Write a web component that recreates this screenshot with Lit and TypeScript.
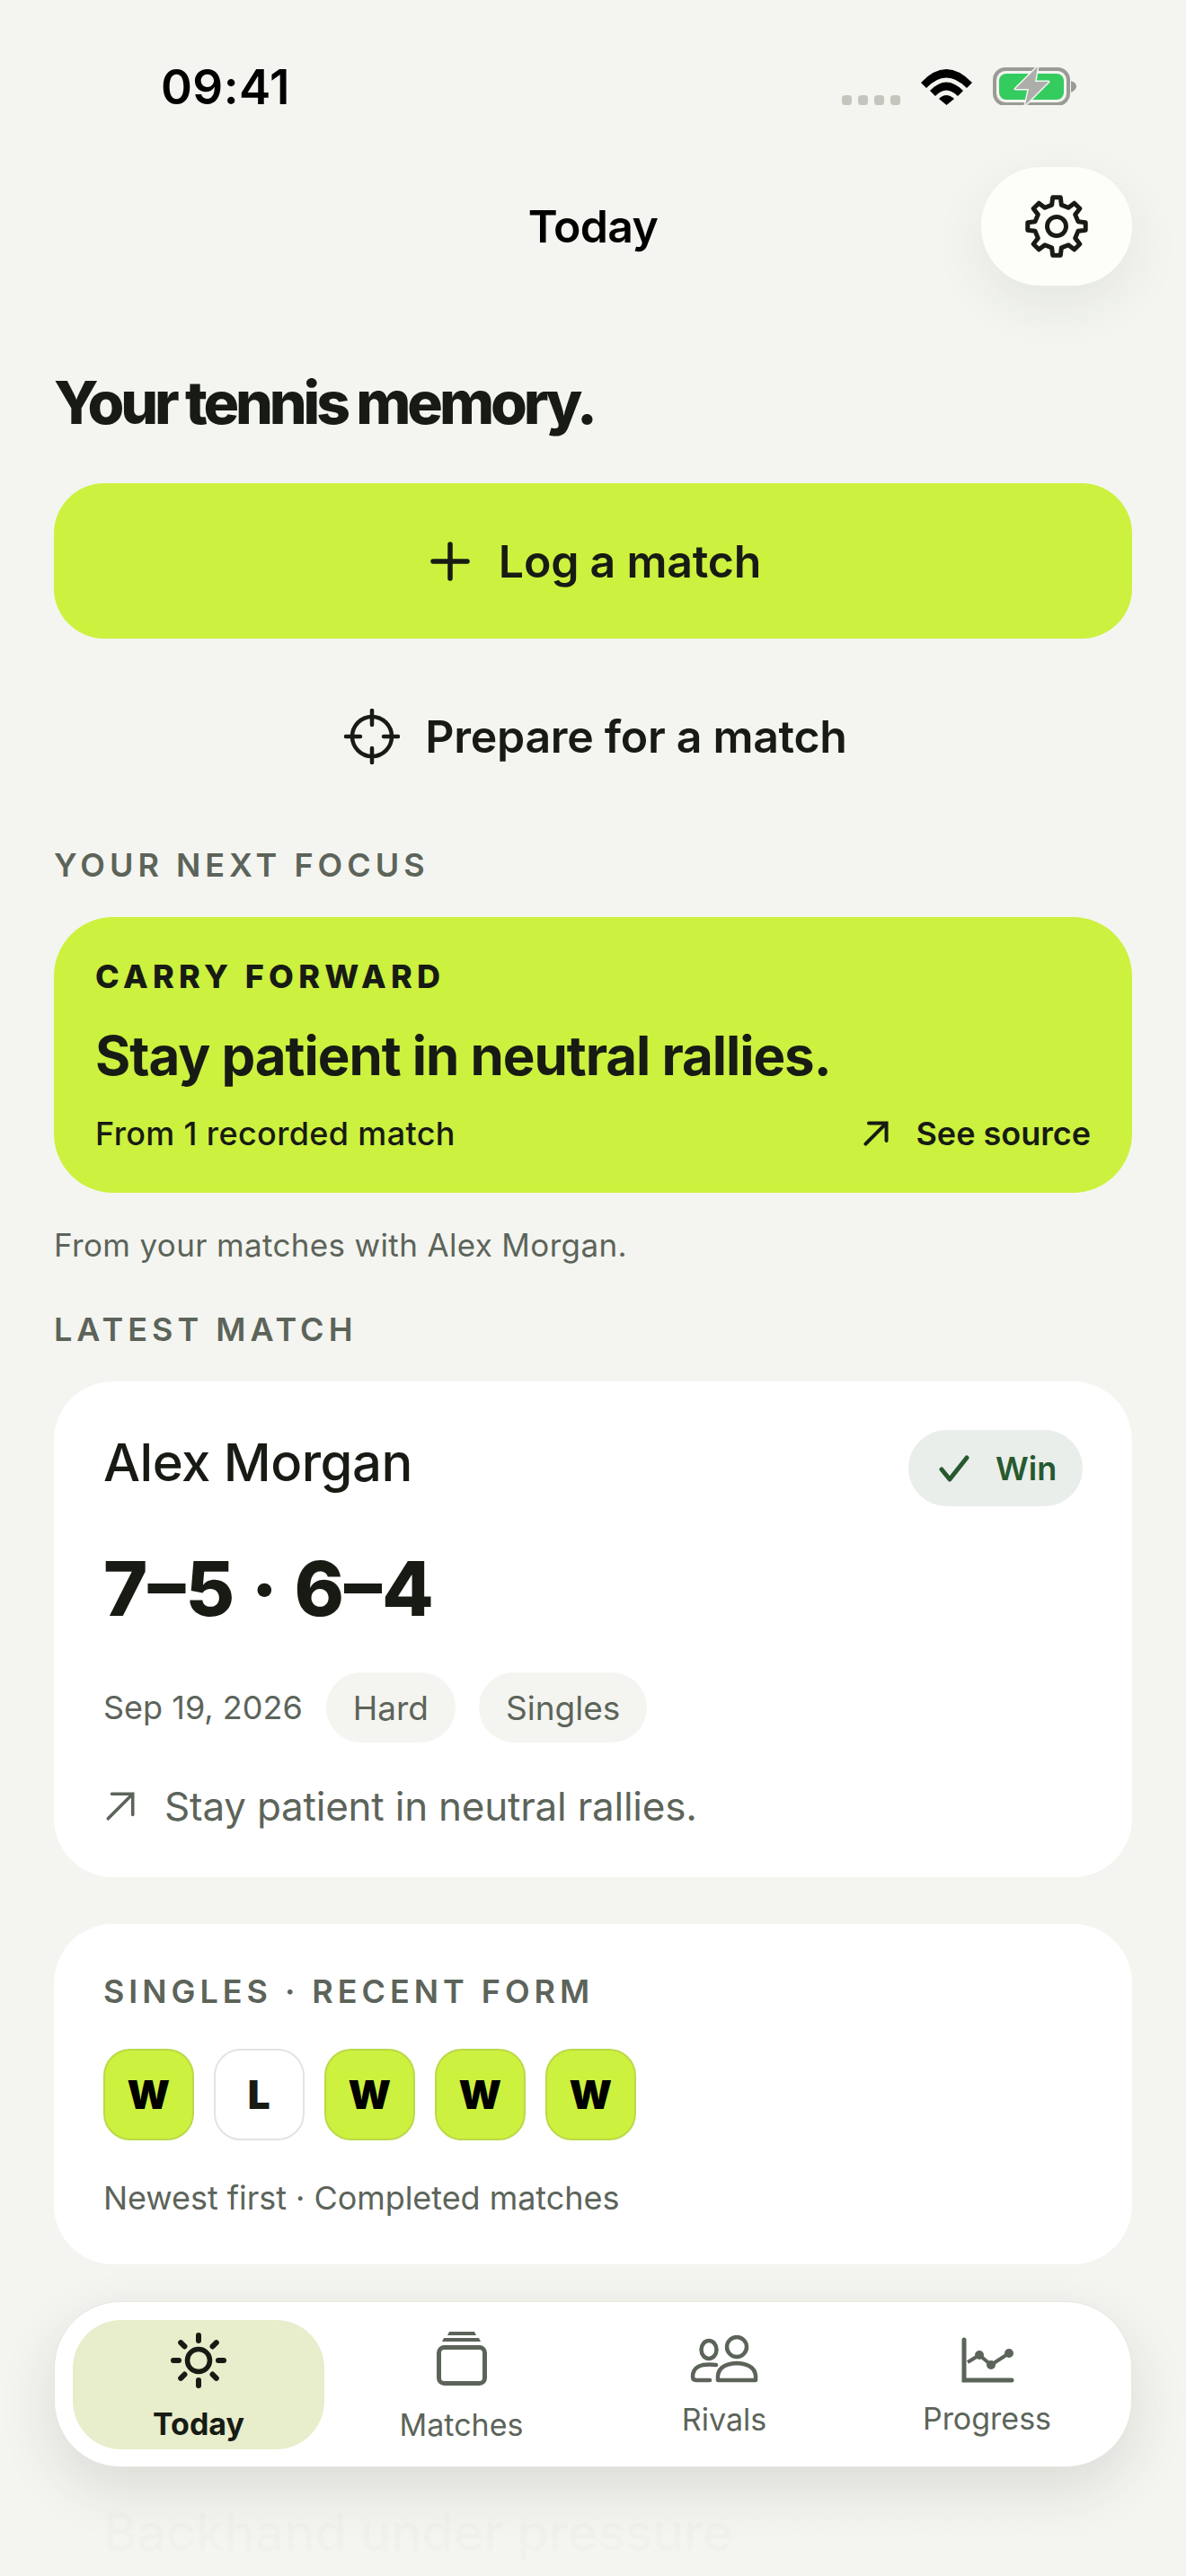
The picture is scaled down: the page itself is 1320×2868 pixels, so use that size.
import { LitElement, html, css, svg } from "lit";
import { customElement } from "lit/decorators.js";

function gearPath(cx: number, cy: number, outer: number, inner: number, teeth: number) {
  const pts: string[] = [];
  const step = (Math.PI * 2) / teeth;
  for (let i = 0; i < teeth; i++) {
    const a = -Math.PI / 2 + i * step;
    const seq: [number, number][] = [
      [inner, a - step * 0.28],
      [outer, a - step * 0.17],
      [outer, a + step * 0.17],
      [inner, a + step * 0.28],
    ];
    for (const [r, t] of seq) {
      pts.push(`${(cx + r * Math.cos(t)).toFixed(2)} ${(cy + r * Math.sin(t)).toFixed(2)}`);
    }
  }
  return "M" + pts.join("L") + "Z";
}

const ink = "#171b14";
const muted = "#5c645a";

const rays = [0, 45, 90, 135, 180, 225, 270, 315];

const arrow = (color: string, w: number) => svg`
  <path d="M4 31 L30 5 M8 5 H30 V27" fill="none" stroke=${color} stroke-width=${w} stroke-linecap="round" stroke-linejoin="miter"/>`;

@customElement("app-root")
export class AppRoot extends LitElement {
  static styles = css`
    :host {
      display: block;
      position: relative;
      width: 1320px;
      height: 2868px;
      overflow: hidden;
      background: #f4f5f0;
      font-family: Inter, "Liberation Sans", sans-serif;
      color: #171b14;
    }
    svg { display: block; flex: none; }
    .status {
      height: 186px;
      box-sizing: border-box;
      padding: 0 122px 0 179px;
      display: flex;
      align-items: flex-start;
      justify-content: space-between;
    }
    .time {
      margin-top: 67px;
      font-size: 53px;
      line-height: 60px;
      font-weight: 600;
      color: #000;
      letter-spacing: 0.4px;
    }
    .sys { margin-top: 75px; display: flex; align-items: flex-start; }
    .sys svg { width: 261px; height: 42px; }
    .page { padding: 0 60px; }
    .head {
      display: grid;
      grid-template-columns: 168px 1fr 168px;
      align-items: center;
      height: 132px;
    }
    .head-title {
      grid-column: 2;
      text-align: center;
      font-size: 50px;
      line-height: 60px;
      font-weight: 600;
      letter-spacing: -0.7px;
      color: #000;
    }
    .gear {
      width: 168px;
      height: 132px;
      border-radius: 66px;
      background: #fefef8;
      box-shadow: 0 20px 60px rgba(40, 45, 35, 0.08);
      display: flex;
      align-items: center;
      justify-content: center;
    }
    h1 {
      margin: 90px 0 0;
      font-size: 66px;
      line-height: 80px;
      font-weight: 800;
      letter-spacing: -4.1px;
    }
    .log {
      margin-top: 50px;
      height: 173px;
      border-radius: 56px;
      background: #ccf13f;
      display: flex;
      align-items: center;
      justify-content: center;
      gap: 32px;
      padding-left: 6px;
      font-size: 50px;
      font-weight: 600;
      letter-spacing: -0.2px;
    }
    .prep {
      margin-top: 64px;
      height: 90px;
      padding-left: 6px;
      display: flex;
      align-items: center;
      justify-content: center;
      gap: 28px;
      font-size: 50px;
      font-weight: 600;
      letter-spacing: -0.3px;
    }
    .label {
      font-size: 36px;
      line-height: 44px;
      font-weight: 600;
      letter-spacing: 5px;
      color: #5c645a;
    }
    .label.first { margin-top: 76px; }
    .label.second { margin-top: 48px; }
    .focus {
      margin-top: 36px;
      height: 307px;
      box-sizing: border-box;
      padding: 44px 46px 0;
      border-radius: 66px;
      background: #ccf13f;
    }
    .focus-kicker {
      font-size: 36px;
      line-height: 44px;
      font-weight: 800;
      letter-spacing: 5.3px;
    }
    .focus-title {
      margin-top: 30px;
      font-size: 60px;
      line-height: 72px;
      font-weight: 700;
      letter-spacing: -1.05px;
    }
    .focus-foot {
      margin-top: 29px;
      display: flex;
      justify-content: space-between;
      align-items: center;
      font-size: 36px;
      line-height: 44px;
      font-weight: 500;
    }
    .from { letter-spacing: 0.35px; }
    .src { display: flex; align-items: center; gap: 28px; font-weight: 600; }
    .note {
      margin-top: 34px;
      font-size: 35px;
      line-height: 48px;
      color: #5c645a;
      letter-spacing: 0.35px;
    }
    .card {
      background: #fff;
      border-radius: 66px;
      box-sizing: border-box;
      padding-left: 55px;
      padding-right: 55px;
    }
    .latest { margin-top: 36px; height: 552px; padding-top: 54px; }
    .name-row { display: flex; justify-content: space-between; align-items: flex-start; }
    .name {
      font-size: 58px;
      line-height: 72px;
      font-weight: 500;
      letter-spacing: -0.5px;
    }
    .win {
      height: 85px;
      width: 194px;
      box-sizing: border-box;
      padding-left: 34px;
      border-radius: 43px;
      background: #e9eeea;
      display: flex;
      align-items: center;
      gap: 29px;
      font-size: 36px;
      font-weight: 600;
      color: #27592f;
    }
    .score {
      margin-top: 42px;
      font-size: 84px;
      line-height: 100px;
      font-weight: 800;
      letter-spacing: 0;
    }
    .meta {
      margin-top: 43px;
      display: flex;
      align-items: center;
      font-size: 36px;
      color: #5c645a;
    }
    .chip {
      height: 78px;
      box-sizing: border-box;
      padding: 0 30px;
      border-radius: 39px;
      background: #f4f5f0;
      display: flex;
      align-items: center;
      margin-left: 26px;
      font-size: 37px;
    }
    .stay {
      margin-top: 43px;
      display: flex;
      align-items: center;
      gap: 30px;
      font-size: 44px;
      line-height: 56px;
      letter-spacing: -0.22px;
      color: #5c645a;
    }
    .form { margin-top: 52px; height: 379px; padding-top: 53px; }
    .form-label {
      font-size: 36px;
      line-height: 44px;
      font-weight: 600;
      letter-spacing: 4.95px;
      color: #5c645a;
    }
    .tiles { margin-top: 42px; display: flex; gap: 22.5px; }
    .tile {
      width: 100.5px;
      height: 102px;
      box-sizing: border-box;
      border-radius: 30px;
      border: 2px solid #e3e3e3;
      background: #fff;
      display: flex;
      align-items: center;
      justify-content: center;
      font-size: 44px;
      font-weight: 900;
    }
    .tile.w { background: #ccf13f; border-color: #bbd948; color: #000; }
    .form-note {
      margin-top: 42px;
      font-size: 36px;
      line-height: 44px;
      letter-spacing: -0.05px;
      color: #5c645a;
    }
    .ghost {
      margin-top: 52px;
      height: 400px;
      padding-top: 212px;
      font-size: 57px;
      line-height: 70px;
      font-weight: 500;
    }
    .fade {
      position: absolute;
      left: 0;
      right: 0;
      top: 2524px;
      bottom: 0;
      background: linear-gradient(to bottom, rgba(244, 245, 240, 0) 0, rgba(244, 245, 240, 0.985) 90px);
    }
    .nav {
      position: absolute;
      left: 60px;
      top: 2562px;
      width: 1200px;
      height: 185px;
      box-sizing: border-box;
      padding: 20px 22px 0 20px;
      border-radius: 74px;
      background: #fff;
      border: 1px solid #e6e7e0;
      box-shadow: 0 24px 64px rgba(40, 45, 35, 0.12);
      display: grid;
      grid-template-columns: repeat(4, 280px);
      column-gap: 12.5px;
    }
    .item {
      height: 144px;
      padding-top: 7px;
      box-sizing: border-box;
      border-radius: 54px;
      display: flex;
      flex-direction: column;
      align-items: center;
      font-size: 34px;
      line-height: 44px;
      font-weight: 400;
      letter-spacing: 0;
      color: #5c645a;
    }
    .item.on {
      background: #e8edcb;
      color: #171b14;
      font-weight: 700;
    }
  `;

  render() {
    const tiles = ["W", "L", "W", "W", "W"];
    return html`
      <div class="status">
        <div class="time">09:41</div>
        <div class="sys">
          <svg viewBox="937 75 261 42">
            ${[937, 955, 973, 991].map(
              (x) => svg`<rect x=${x} y="106" width="11" height="11" rx="3.5" fill="#c4c5bd"/>`
            )}
            <path d="M1025 92 Q1053 62 1082 92 L1076 98 Q1053 75 1031 98Z" fill="#000"/>
            <path d="M1035 101 Q1053 82 1072 101 L1066 107 Q1053 94 1041 107Z" fill="#000"/>
            <path d="M1045 110 Q1053 102 1062 110 L1053.500 117Z" fill="#000"/>
            <rect x="1107" y="77" width="82" height="39" rx="12" fill="none" stroke="#9a9b95" stroke-width="4"/>
            <rect x="1112" y="82" width="72" height="29" rx="8" fill="#34cb5f"/>
            <path d="M1192 90 Q1198 92 1198 96 Q1198 100 1192 103Z" fill="#9a9b95"/>
            <path d="M1155 74 L1130 99 H1145 L1141 117 L1167 91 H1152Z" fill="#adaeaa" stroke="#f4f5f0" stroke-width="3" stroke-linejoin="round" paint-order="stroke"/>
          </svg>
        </div>
      </div>
      <div class="page">
        <div class="head">
          <div class="head-title">Today</div>
          <div class="gear">
            <svg width="76" height="76" viewBox="0 0 76 76">
              <path d=${gearPath(38, 38, 32.5, 24.5, 8)} fill="none" stroke=${ink} stroke-width="5" stroke-linejoin="round"/>
              <circle cx="38" cy="38" r="10.500" fill="none" stroke=${ink} stroke-width="5"/>
            </svg>
          </div>
        </div>
        <h1>Your tennis memory.</h1>
        <div class="log">
          <svg width="44" height="44" viewBox="0 0 44 44">
            <path d="M22 3V41M3 22H41" stroke=${ink} stroke-width="5.500" stroke-linecap="round"/>
          </svg>
          <span>Log a match</span>
        </div>
        <div class="prep">
          <svg width="62" height="62" viewBox="0 0 62 62" fill="none" stroke=${ink} stroke-width="4.500" stroke-linecap="round">
            <circle cx="31" cy="31" r="22"/>
            <path d="M31 2V18M31 44V60M2 31H18M44 31H60"/>
          </svg>
          <span>Prepare for a match</span>
        </div>
        <div class="label first">YOUR NEXT FOCUS</div>
        <div class="focus">
          <div class="focus-kicker">CARRY FORWARD</div>
          <div class="focus-title">Stay patient in neutral rallies.</div>
          <div class="focus-foot">
            <span class="from">From 1 recorded match</span>
            <span class="src">
              <svg width="32" height="32" viewBox="0 0 34 36">${arrow(ink, 4.5)}</svg>
              See source
            </span>
          </div>
        </div>
        <div class="note">From your matches with Alex Morgan.</div>
        <div class="label second">LATEST MATCH</div>
        <div class="card latest">
          <div class="name-row">
            <div class="name">Alex Morgan</div>
            <div class="win">
              <svg width="34" height="30" viewBox="0 0 34 30">
                <path d="M3 16 L12 27 L31 3" fill="none" stroke="#27592f" stroke-width="5" stroke-linecap="round" stroke-linejoin="round"/>
              </svg>
              <span>Win</span>
            </div>
          </div>
          <div class="score">7–5 · 6–4</div>
          <div class="meta">
            <span>Sep 19, 2026</span>
            <span class="chip">Hard</span>
            <span class="chip">Singles</span>
          </div>
          <div class="stay">
            <svg width="38" height="38" viewBox="0 0 34 36">${arrow(muted, 3.4)}</svg>
            <span>Stay patient in neutral rallies.</span>
          </div>
        </div>
        <div class="card form">
          <div class="form-label">SINGLES · RECENT FORM</div>
          <div class="tiles">
            ${tiles.map((t) => html`<div class="tile ${t === "W" ? "w" : ""}">${t}</div>`)}
          </div>
          <div class="form-note">Newest first · Completed matches</div>
        </div>
        <div class="card ghost">Backhand under pressure</div>
      </div>
      <div class="fade"></div>
      <div class="nav">
        <div class="item on">
          <svg width="80" height="87" viewBox="181 2590 80 87">
            <circle cx="221" cy="2628" r="12.500" fill="none" stroke=${ink} stroke-width="5.500"/>
            ${rays.map(
              (a) => svg`<line x1="221" y1="2606" x2="221" y2="2600" stroke=${ink} stroke-width="6" stroke-linecap="round" transform="rotate(${a} 221 2628)"/>`
            )}
          </svg>
          <span>Today</span>
        </div>
        <div class="item">
          <svg width="80" height="88" viewBox="473 2590 80 88">
            <rect x="487.500" y="2613.500" width="51" height="40" rx="6" fill="none" stroke=${muted} stroke-width="5"/>
            <path d="M491 2607 L493 2603 H532 L534 2607Z M497 2600 L499 2596 H527 L529 2600Z" fill=${muted}/>
          </svg>
          <span>Matches</span>
        </div>
        <div class="item">
          <svg width="80" height="82" viewBox="766 2590 80 82" fill="none" stroke=${muted} stroke-width="4.500" stroke-linecap="round">
            <ellipse cx="789" cy="2616" rx="8.500" ry="10"/>
            <ellipse cx="820" cy="2613" rx="11" ry="11"/>
            <path d="M797 2633 Q771 2630 771 2646 Q771 2650 775 2650 H790"/>
            <path d="M799 2650 Q797 2632 820 2631 Q843 2632 841 2650Z" stroke-linejoin="round"/>
          </svg>
          <span>Rivals</span>
        </div>
        <div class="item">
          <svg width="80" height="81" viewBox="1058 2590 80 81">
            <path d="M1072 2605 V2650 H1125" fill="none" stroke=${muted} stroke-width="5" stroke-linecap="round" stroke-linejoin="miter"/>
            <path d="M1076 2630 L1089 2622 L1102 2633 L1122 2620" fill="none" stroke=${muted} stroke-width="4"/>
            <circle cx="1089" cy="2622" r="5" fill=${muted}/>
            <circle cx="1102" cy="2633" r="5" fill=${muted}/>
            <circle cx="1122" cy="2620" r="5" fill=${muted}/>
          </svg>
          <span>Progress</span>
        </div>
      </div>
    `;
  }
}
